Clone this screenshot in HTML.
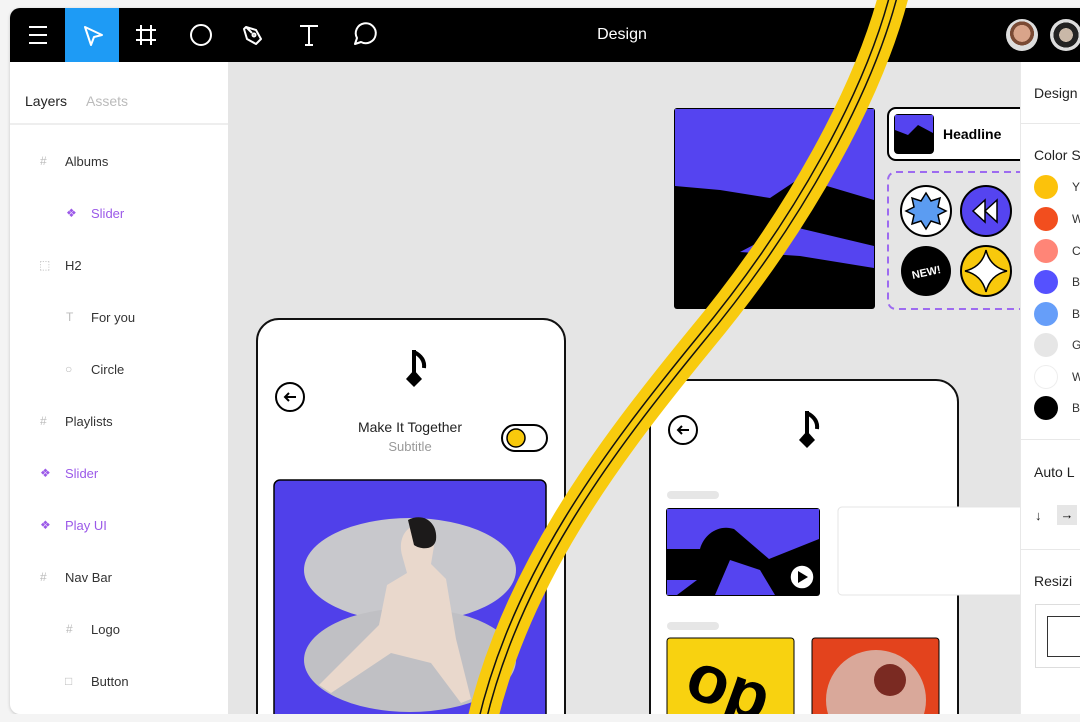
<!DOCTYPE html>
<html><head><meta charset="utf-8"><style>
*{margin:0;padding:0;box-sizing:border-box}
body{width:1080px;height:722px;overflow:hidden;background:#f4f4f4;font-family:"Liberation Sans",sans-serif;position:relative}
.abs{position:absolute}
.win{left:10px;top:8px;width:1080px;height:706px;background:#e5e5e5;border-radius:10px 0 0 10px;overflow:hidden;box-shadow:0 1px 3px rgba(0,0,0,.2)}
.tb{left:0;top:0;width:1080px;height:54px;background:#000}
.lp{left:0;top:54px;width:218px;height:652px;background:#fff}
.rp{left:1010px;top:54px;width:80px;height:652px;background:#fff}
.it{position:absolute;font-size:13px;color:#333}
.ic{position:absolute;font-size:12px;color:#bbb}
.pur{color:#9b59e8}
.sw{position:absolute;left:1024px;width:24px;height:24px;border-radius:50%}
.sl{position:absolute;left:1062px;font-size:12px;color:#333}
</style></head><body>
<div class="abs win">
<div class="abs tb">
 <div class="abs" style="left:55px;top:0;width:54px;height:54px;background:#1e9bf5"></div>
 <svg class="abs" style="left:0;top:0" width="400" height="54" fill="none" stroke="#fff" stroke-width="2">
  <path d="M19 19h18M19 27h18M19 35h18"/>
  <path d="M75 19l17 8-8 2-3 8z" stroke-linejoin="round"/>
  <path d="M131 17v20M141 17v20M126 22h20M126 32h20"/>
  <circle cx="191" cy="27" r="10"/>
  <path d="M236 19l10 3 5 9-5 5-9-5-3-10z M236 19l6 6" stroke-linejoin="round"/><circle cx="244" cy="27" r="1.5"/>
  <path d="M290 18h18M299 18v19M295 37h8"/>
  <path d="M345 36l2-6a10 10 0 1 1 4 4z" stroke-linejoin="round"/>
 </svg>
 <div class="abs" style="left:560px;top:18px;width:104px;text-align:center;color:#fff;font-size:16px">Design</div>
 <div class="abs" style="left:996px;top:11px;width:32px;height:32px;border-radius:50%;background:radial-gradient(circle at 50% 45%,#d9a48a 0 35%,#7a4a34 36% 50%,#ddd 51%)"></div>
 <div class="abs" style="left:1040px;top:11px;width:32px;height:32px;border-radius:50%;background:radial-gradient(circle at 50% 50%,#c9b8a8 0 30%,#222 31% 55%,#ddd 56%)"></div>
</div>
<div class="abs lp">
 <div class="it" style="left:15px;top:31px;font-size:14px;color:#222">Layers</div>
 <div class="it" style="left:76px;top:31px;font-size:14px;color:#bbb">Assets</div>
 <div class="abs" style="left:0;top:61px;width:218px;height:2px;background:#eee"></div>
 <span class="ic" style="left:30px;top:92px">#</span><div class="it" style="left:55px;top:92px">Albums</div>
 <span class="ic pur" style="left:56px;top:144px">❖</span><div class="it pur" style="left:81px;top:144px">Slider</div>
 <span class="ic" style="left:29px;top:196px">⬚</span><div class="it" style="left:55px;top:196px">H2</div>
 <span class="ic" style="left:56px;top:248px">T</span><div class="it" style="left:81px;top:248px">For you</div>
 <span class="ic" style="left:55px;top:300px">○</span><div class="it" style="left:81px;top:300px">Circle</div>
 <span class="ic" style="left:30px;top:352px">#</span><div class="it" style="left:55px;top:352px">Playlists</div>
 <span class="ic pur" style="left:30px;top:404px">❖</span><div class="it pur" style="left:55px;top:404px">Slider</div>
 <span class="ic pur" style="left:30px;top:456px">❖</span><div class="it pur" style="left:55px;top:456px">Play UI</div>
 <span class="ic" style="left:30px;top:508px">#</span><div class="it" style="left:55px;top:508px">Nav Bar</div>
 <span class="ic" style="left:56px;top:560px">#</span><div class="it" style="left:81px;top:560px">Logo</div>
 <span class="ic" style="left:55px;top:612px">□</span><div class="it" style="left:81px;top:612px">Button</div>
</div>
</div>

<svg class="abs" style="left:0;top:0" width="1080" height="722">
 <rect x="674" y="108" width="201" height="201" rx="3" fill="#000"/>
 <path d="M675 109H874V200L800 178L770 198L720 190L675 186Z" fill="#5544f0"/>
 <path d="M740 252L790 226L874 246V268L800 256Z" fill="#5544f0"/>
 <rect x="888" y="108" width="140" height="52" rx="8" fill="#fff" stroke="#000" stroke-width="2"/>
 <rect x="894" y="114" width="40" height="40" rx="4" fill="#000"/>
 <path d="M895 115h38v18l-15-8-10 10-13-5z" fill="#5544f0"/>
 <text x="943" y="139" font-family="Liberation Sans" font-weight="bold" font-size="14">Headline</text>
 <rect x="888" y="172" width="140" height="137" rx="8" fill="none" stroke="#9d6bf0" stroke-width="2" stroke-dasharray="7 5"/>
 <circle cx="926" cy="211" r="25" fill="#fff" stroke="#000" stroke-width="2"/>
 <path d="M926 193l5 8 9-3-2 9 8 4-8 4 2 9-9-3-5 8-5-8-9 3 2-9-8-4 8-4-2-9 9 3z" fill="#5b9cf2" stroke="#000" stroke-width="1.5"/>
 <circle cx="986" cy="211" r="25" fill="#5544f0" stroke="#000" stroke-width="2"/>
 <path d="M985 200l-12 11 12 11zM997 200l-12 11 12 11z" fill="#fff" stroke="#000" stroke-width="1.5"/>
 <circle cx="926" cy="271" r="25" fill="#000"/>
 <text x="926" y="276" text-anchor="middle" font-family="Liberation Sans" font-weight="bold" font-size="11" fill="#fff" transform="rotate(-12 926 271)">NEW!</text>
 <circle cx="986" cy="271" r="25" fill="#f8c90c" stroke="#000" stroke-width="2"/>
 <path d="M986 250q4 17 21 21q-17 4-21 21q-4-17-21-21q17-4 21-21z" fill="#fff" stroke="#000" stroke-width="1.5"/>

 <rect x="257" y="319" width="308" height="420" rx="22" fill="#fff" stroke="#111" stroke-width="2"/>
 <g transform="translate(402,350)"><path d="M12 0v30M12 2c6 3 11 8 10 16" fill="none" stroke="#000" stroke-width="4"/><path d="M12 20l8 9-8 8-8-8z" fill="#000"/></g>
 <circle cx="290" cy="397" r="14" fill="#fff" stroke="#000" stroke-width="2"/>
 <path d="M296 397h-11M289 393l-4 4 4 4" fill="none" stroke="#000" stroke-width="2"/>
 <text x="410" y="432" text-anchor="middle" font-family="Liberation Sans" font-size="14" fill="#222">Make It Together</text>
 <text x="410" y="451" text-anchor="middle" font-family="Liberation Sans" font-size="13" fill="#999">Subtitle</text>
 <rect x="502" y="425" width="45" height="26" rx="13" fill="#fff" stroke="#000" stroke-width="2"/>
 <circle cx="516" cy="438" r="9" fill="#f8c90c" stroke="#000" stroke-width="1.5"/>
 <rect x="274" y="480" width="272" height="250" rx="6" fill="#5040ea" stroke="#000" stroke-width="1.5"/>
 <ellipse cx="410" cy="570" rx="106" ry="52" fill="#c8c8cc"/>
 <ellipse cx="410" cy="660" rx="106" ry="52" fill="#c0c0c4"/>
 <path d="M420 525c-15 0-22 15-18 30l5 18-20 12-8 40-60 60 12 8 60-40 40 10 30 40 10-4-15-60-10-60-15-15 5-30z" fill="#e9d8cc"/>
 <path d="M408 520c15-8 30 2 28 20-2 10-15 10-22 5z" fill="#1c1a1a"/>

 <rect x="650" y="380" width="308" height="360" rx="22" fill="#fff" stroke="#111" stroke-width="2"/>
 <g transform="translate(795,411)"><path d="M12 0v30M12 2c6 3 11 8 10 16" fill="none" stroke="#000" stroke-width="4"/><path d="M12 20l8 9-8 8-8-8z" fill="#000"/></g>
 <circle cx="683" cy="430" r="14" fill="#fff" stroke="#000" stroke-width="2"/>
 <path d="M689 430h-11M682 426l-4 4 4 4" fill="none" stroke="#000" stroke-width="2"/>
 <rect x="667" y="491" width="52" height="8" rx="4" fill="#e6e6e6"/>
 <rect x="666" y="508" width="154" height="88" rx="3" fill="#000"/>
 <path d="M667 509h152v30l-50 20-35-30c-15-5-30 5-34 20h-33z" fill="#5544f0"/>
 <path d="M730 560l30 10 15 25h-60z M667 580h30l-20 15h-10z" fill="#5544f0"/>
 <circle cx="802" cy="577" r="12" fill="#fff" stroke="#000" stroke-width="1.5"/><path d="M798 571l10 6-10 6z" fill="#000"/>
 <rect x="838" y="507" width="190" height="88" rx="4" fill="#fff" stroke="#e4e4e4"/>
 <rect x="667" y="622" width="52" height="8" rx="4" fill="#e6e6e6"/>
 <rect x="667" y="638" width="127" height="90" rx="3" fill="#f8d210" stroke="#000"/>
 <text x="690" y="710" font-family="Liberation Sans" font-weight="bold" font-size="68" fill="#000" transform="rotate(20 730 680)">op</text>
 <rect x="812" y="638" width="127" height="90" rx="3" fill="#e3431d" stroke="#000"/>
 <circle cx="876" cy="700" r="50" fill="#d9a89a"/><circle cx="890" cy="680" r="16" fill="#7a2a22"/>

 <g fill="none">
  <path d="M895 -10 C870 90,800 220,700 340 C610 450,510 580,478 740" stroke="#f8cb0e" stroke-width="30"/>
  <path d="M895 -10 C870 90,800 220,700 340 C610 450,510 580,478 740" stroke="#111" stroke-width="9"/>
  <path d="M895 -10 C870 90,800 220,700 340 C610 450,510 580,478 740" stroke="#f8cb0e" stroke-width="6"/>
 </g>
</svg>

<div class="abs rp" style="left:1020px;top:62px;width:60px;height:652px;border-left:1px solid #e8e8e8">
 <div class="abs" style="left:13px;top:23px;font-size:14px;color:#222;white-space:nowrap">Design</div>
 <div class="abs" style="left:0;top:61px;width:60px;height:1px;background:#e8e8e8"></div>
 <div class="abs" style="left:13px;top:85px;font-size:14px;color:#222;white-space:nowrap">Color S</div>
 <div class="abs" style="left:0;top:377px;width:60px;height:1px;background:#e8e8e8"></div>
 <div class="abs" style="left:13px;top:402px;font-size:14px;color:#222;white-space:nowrap">Auto L</div>
 <div class="abs" style="left:14px;top:446px;font-size:13px;color:#222">↓</div>
 <div class="abs" style="left:36px;top:443px;width:20px;height:20px;background:#e6e6e6;font-size:13px;text-align:center;line-height:20px">→</div>
 <div class="abs" style="left:0;top:487px;width:60px;height:1px;background:#e8e8e8"></div>
 <div class="abs" style="left:13px;top:511px;font-size:14px;color:#222;white-space:nowrap">Resizi</div>
 <div class="abs" style="left:14px;top:542px;width:60px;height:64px;border:1px solid #ddd"></div>
 <div class="abs" style="left:26px;top:554px;width:50px;height:41px;border:1.5px solid #333"></div>
</div>
<div class="sw" style="left:1034px;top:175px;background:#fcc20b"></div><div class="sl" style="left:1072px;top:180px">Y</div>
<div class="sw" style="left:1034px;top:207px;background:#f24e1e"></div><div class="sl" style="left:1072px;top:212px">W</div>
<div class="sw" style="left:1034px;top:239px;background:#ff8577"></div><div class="sl" style="left:1072px;top:244px">C</div>
<div class="sw" style="left:1034px;top:270px;background:#5551ff"></div><div class="sl" style="left:1072px;top:275px">B</div>
<div class="sw" style="left:1034px;top:302px;background:#669ef9"></div><div class="sl" style="left:1072px;top:307px">B</div>
<div class="sw" style="left:1034px;top:333px;background:#e6e6e6"></div><div class="sl" style="left:1072px;top:338px">G</div>
<div class="sw" style="left:1034px;top:365px;background:#fff;border:1px solid #eee"></div><div class="sl" style="left:1072px;top:370px">W</div>
<div class="sw" style="left:1034px;top:396px;background:#000"></div><div class="sl" style="left:1072px;top:401px">B</div>
<div class="abs" style="left:0;top:714px;width:1080px;height:8px;background:#f4f4f4"></div>
</body></html>
